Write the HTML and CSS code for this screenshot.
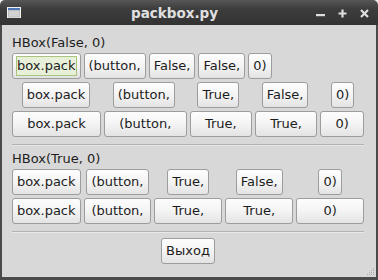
FILE: index.html
```html
<!DOCTYPE html>
<html lang="en">
<head>
    <meta charset="UTF-8">
    <title>packbox.py</title>
    <link rel="stylesheet" href="styles.css">
</head>
<body>
    <div class="window">
        <div class="titlebar">
            <svg class="app-icon" width="14" height="11" viewBox="0 0 14 11">
                <rect x="0.5" y="0.5" width="13" height="10" fill="#e4e4e4" stroke="#f4f4f4"/>
                <rect x="1" y="1" width="12" height="2" fill="#4f78b8"/>
                <rect x="1.5" y="3.5" width="11" height="6.5" fill="#d2d2d2" stroke="#bdbdbd"/>
            </svg>
            <span class="title">packbox.py</span>
            <div class="controls">
                <svg width="9" height="9" viewBox="0 0 9 9"><rect x="0" y="5" width="9" height="2.2" fill="#dedede"/></svg>
                <svg width="9" height="9" viewBox="0 0 9 9"><path d="M4.5 0.5v8M0.5 4.5h8" stroke="#dedede" stroke-width="2.2"/></svg>
                <svg width="9" height="9" viewBox="0 0 9 9"><path d="M1 1l7 7M8 1l-7 7" stroke="#dedede" stroke-width="2.2"/></svg>
            </div>
        </div>

        <div class="content">
            <div class="caption">HBox(False, 0)</div>
            <div class="rows">
                <div class="row">
                    <button class="btn"><span class="btn-label focus">box.pack</span></button>
                    <button class="btn"><span class="btn-label">(button,</span></button>
                    <button class="btn"><span class="btn-label">False,</span></button>
                    <button class="btn"><span class="btn-label">False,</span></button>
                    <button class="btn"><span class="btn-label">0)</span></button>
                </div>
                <div class="row row-expand">
                    <div class="cell"><button class="btn"><span class="btn-label">box.pack</span></button></div>
                    <div class="cell"><button class="btn"><span class="btn-label">(button,</span></button></div>
                    <div class="cell"><button class="btn"><span class="btn-label">True,</span></button></div>
                    <div class="cell"><button class="btn"><span class="btn-label">False,</span></button></div>
                    <div class="cell"><button class="btn"><span class="btn-label">0)</span></button></div>
                </div>
                <div class="row row-fill">
                    <button class="btn"><span class="btn-label">box.pack</span></button>
                    <button class="btn"><span class="btn-label">(button,</span></button>
                    <button class="btn"><span class="btn-label">True,</span></button>
                    <button class="btn"><span class="btn-label">True,</span></button>
                    <button class="btn"><span class="btn-label">0)</span></button>
                </div>
            </div>

            <hr class="separator">

            <div class="caption">HBox(True, 0)</div>
            <div class="rows">
                <div class="grid grid-center">
                    <button class="btn"><span class="btn-label">box.pack</span></button>
                    <button class="btn"><span class="btn-label">(button,</span></button>
                    <button class="btn"><span class="btn-label">True,</span></button>
                    <button class="btn"><span class="btn-label">False,</span></button>
                    <button class="btn"><span class="btn-label">0)</span></button>
                </div>
                <div class="grid">
                    <button class="btn"><span class="btn-label">box.pack</span></button>
                    <button class="btn"><span class="btn-label">(button,</span></button>
                    <button class="btn"><span class="btn-label">True,</span></button>
                    <button class="btn"><span class="btn-label">True,</span></button>
                    <button class="btn"><span class="btn-label">0)</span></button>
                </div>
            </div>

            <hr class="separator">

            <div class="footer">
                <button class="btn"><span class="btn-label">Выход</span></button>
            </div>

            <svg class="grip" width="9" height="9" viewBox="0 0 9 9">
                <g fill="#a8a8a8">
                    <rect x="7" y="1" width="1" height="1"/>
                    <rect x="5" y="3" width="1" height="1"/><rect x="7" y="3" width="1" height="1"/>
                    <rect x="3" y="5" width="1" height="1"/><rect x="5" y="5" width="1" height="1"/><rect x="7" y="5" width="1" height="1"/>
                    <rect x="1" y="7" width="1" height="1"/><rect x="3" y="7" width="1" height="1"/><rect x="5" y="7" width="1" height="1"/><rect x="7" y="7" width="1" height="1"/>
                </g>
            </svg>
        </div>
    </div>
</body>
</html>
```

FILE: styles.css
```css
* { box-sizing: border-box; }
html, body { margin: 0; }
body {
    background: #f0f0f0;
    font-family: "DejaVu Sans", sans-serif;
    color: #1e1e1e;
}
.window {
    width: 378px;
    height: 280px;
    display: flex;
    flex-direction: column;
    border-radius: 5px 5px 0 0;
    overflow: hidden;
}
.titlebar {
    height: 25px;
    flex: none;
    display: flex;
    align-items: center;
    background: linear-gradient(#575757, #3d3d3d 35%, #333333);
    color: #e0e0e0;
}
.app-icon { margin-left: 7px; flex: none; }
.title {
    flex: 1;
    text-align: center;
    padding-left: 12px;
    font-weight: bold;
    font-size: 13.5px;
}
.controls {
    display: flex;
    gap: 13px;
    margin-right: 9px;
    margin-top: 2px;
}
.content {
    flex: 1;
    position: relative;
    background: #d8d8d8;
    border: solid #4a4a4a;
    border-width: 0 2px 3px;
    padding: 10px 12px 0 10px;
}
.caption {
    font-size: 13px;
    line-height: 16px;
    margin-bottom: 2px;
}
.rows { display: flex; flex-direction: column; gap: 3px; }
.row { display: flex; gap: 3px; }
.row-expand .cell { flex: 1 1 auto; display: flex; justify-content: center; }
.row-fill .btn { flex: 1 1 auto; }
.grid { display: grid; grid-template-columns: repeat(5, 1fr); gap: 3px; }
.grid-center { justify-items: center; }

.btn {
    height: 26px;
    margin: 0;
    padding: 0 3px;
    border: 1px solid #9d9d9d;
    border-radius: 3px;
    background: linear-gradient(#fdfdfd, #f4f4f4 50%, #e3e3e3);
    font: 13px "DejaVu Sans", sans-serif;
    color: #1c1c1c;
    display: flex;
    align-items: center;
    justify-content: center;
}
.btn-label {
    border: 1px solid transparent;
    line-height: 18px;
    white-space: nowrap;
}
.btn-label.focus { background: #e8f0d9; border-color: #a9c47f; }

.separator {
    height: 0;
    margin: 7px 0 5px;
    border: 0;
    border-top: 1px solid #b2b2b2;
    border-bottom: 1px solid #e8e8e8;
}
.footer { display: flex; justify-content: center; }
.grip { position: absolute; right: 1px; bottom: 1px; }
```
